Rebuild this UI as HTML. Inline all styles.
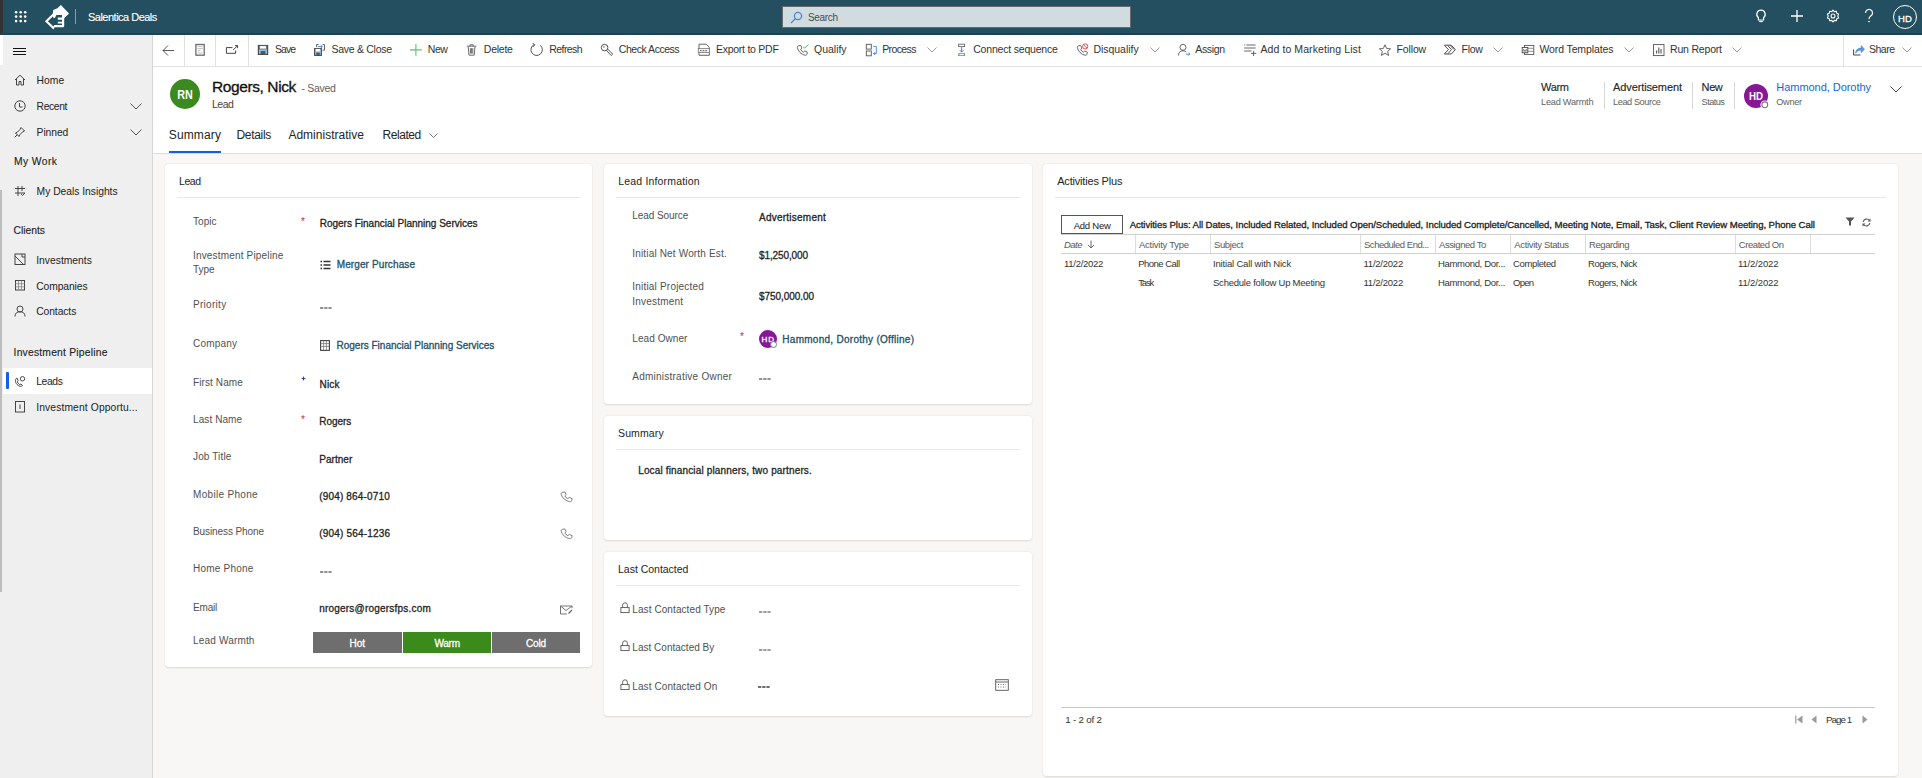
<!DOCTYPE html>
<html><head><meta charset="utf-8"><style>
html,body{margin:0;padding:0;}
body{width:1922px;height:778px;position:relative;overflow:hidden;background:#F8F7F6;font-family:"Liberation Sans",sans-serif;}
.t{position:absolute;white-space:nowrap;line-height:1;font-family:"Liberation Sans",sans-serif;}
svg{overflow:visible}
</style></head><body>
<div style="position:absolute;left:0px;top:0px;width:1922px;height:34px;background:#234F60"></div>
<div style="position:absolute;left:0px;top:33px;width:1922px;height:2px;background:#1B4353"></div>
<div style="position:absolute;left:0px;top:0px;width:3px;height:33px;background:#333"></div>
<div style="position:absolute;left:0px;top:35px;width:152px;height:743px;background:#EFEFEF"></div>
<div style="position:absolute;left:152px;top:35px;width:1px;height:743px;background:#D6D6D6"></div>
<div style="position:absolute;left:0px;top:35px;width:3px;height:30px;background:#FFFFFF"></div>
<div style="position:absolute;left:0px;top:190px;width:1.5px;height:402px;background:#BDBDBD"></div>
<div style="position:absolute;left:153px;top:35px;width:1769px;height:31px;background:#FFFFFF"></div>
<div style="position:absolute;left:153px;top:66px;width:1769px;height:1px;background:#E1E1E1"></div>
<div style="position:absolute;left:153px;top:67px;width:1769px;height:86px;background:#FFFFFF"></div>
<div style="position:absolute;left:153px;top:153px;width:1769px;height:1px;background:#DCDCDC"></div>
<div style="position:absolute;left:169px;top:151px;width:52px;height:2px;background:#1560D8"></div>
<div style="position:absolute;left:165px;top:164px;width:427px;height:503px;background:#fff;border-radius:4px;box-shadow:0 0.5px 2px rgba(0,0,0,0.13)"></div>
<div style="position:absolute;left:604px;top:164px;width:428px;height:240px;background:#fff;border-radius:4px;box-shadow:0 0.5px 2px rgba(0,0,0,0.13)"></div>
<div style="position:absolute;left:604px;top:416px;width:428px;height:124px;background:#fff;border-radius:4px;box-shadow:0 0.5px 2px rgba(0,0,0,0.13)"></div>
<div style="position:absolute;left:604px;top:552px;width:428px;height:164px;background:#fff;border-radius:4px;box-shadow:0 0.5px 2px rgba(0,0,0,0.13)"></div>
<div style="position:absolute;left:1043px;top:164px;width:855px;height:612px;background:#fff;border-radius:4px;box-shadow:0 0.5px 2px rgba(0,0,0,0.13)"></div>
<div style="position:absolute;left:177px;top:197px;width:403px;height:1px;background:#E8E8E8"></div>
<div style="position:absolute;left:616px;top:197px;width:404px;height:1px;background:#E8E8E8"></div>
<div style="position:absolute;left:616px;top:449px;width:404px;height:1px;background:#E8E8E8"></div>
<div style="position:absolute;left:616px;top:585px;width:404px;height:1px;background:#E8E8E8"></div>
<div style="position:absolute;left:1055px;top:197px;width:831px;height:1px;background:#E8E8E8"></div>
<div class="t" style="left:88.0px;top:12.00px;font-size:11px;color:#FFFFFF;letter-spacing:-0.509px;-webkit-text-stroke:0.12px #FFFFFF;">Salentica Deals</div>
<div style="position:absolute;left:782px;top:6px;width:349px;height:22px;background:#D1DCE1;border:1px solid #6B6B6B;box-sizing:border-box"></div>
<div class="t" style="left:808.0px;top:13.00px;font-size:10px;color:#4A4A4A;letter-spacing:-0.337px;">Search</div>
<div style="position:absolute;left:75px;top:9px;width:1px;height:15px;background:rgba(255,255,255,0.45)"></div>
<svg style="position:absolute;left:0;top:0" width="40" height="34" viewBox="0 0 40 34"><circle cx="16.1" cy="12.2" r="1.3" fill="#fff"/><circle cx="16.1" cy="16.6" r="1.3" fill="#fff"/><circle cx="16.1" cy="21.1" r="1.3" fill="#fff"/><circle cx="20.7" cy="12.2" r="1.3" fill="#fff"/><circle cx="20.7" cy="16.6" r="1.3" fill="#fff"/><circle cx="20.7" cy="21.1" r="1.3" fill="#fff"/><circle cx="25.2" cy="12.2" r="1.3" fill="#fff"/><circle cx="25.2" cy="16.6" r="1.3" fill="#fff"/><circle cx="25.2" cy="21.1" r="1.3" fill="#fff"/></svg>
<svg style="position:absolute;left:0;top:0" width="80" height="34" viewBox="0 0 80 34"><path fill-rule="evenodd" fill="#fff" d="M60.9 5.1 L69 13.4 L64.2 18.2 L64.2 26 Q64.2 27.3 63 27.3 L54.6 27.3 L53.4 29.6 L44.9 21.3 L52.8 13.6 L53.2 10.1 L57.4 8.2 Z M52.8 16.4 L47.9 21.3 L53.4 26.6 L54.3 25.1 L62 25.1 L62 23.6 L57.8 23.6 L57.8 21.7 L62 21.7 L62 19.7 L57.8 19.7 L57.8 17.4 L62 17.4 L62 15.1 L56.4 15.1 L55 17.8 L53.8 18.2 Z"/></svg>
<svg style="position:absolute;left:790px;top:11px" width="13" height="13" viewBox="0 0 13 13" fill="none"><circle cx="8" cy="5" r="3.6" stroke="#4C86C6" stroke-width="1.3"/><path d="M5.4 7.6 L1 12" stroke="#4C86C6" stroke-width="1.3"/></svg>
<svg style="position:absolute;left:1755px;top:9px" width="12" height="14" viewBox="0 0 12 14" fill="none"><path d="M6 1.2 a4.2 4.2 0 0 0 -2.6 7.5 v2.3 h5.2 v-2.3 a4.2 4.2 0 0 0 -2.6 -7.5 z" stroke="#fff" stroke-width="1.2"/><path d="M4.2 12.5 h3.6" stroke="#fff" stroke-width="1.2"/></svg>
<svg style="position:absolute;left:1790px;top:9px" width="14" height="14" viewBox="0 0 14 14" fill="none"><path d="M7 1 V13 M1 7 H13" stroke="#fff" stroke-width="1.3"/></svg>
<svg style="position:absolute;left:1826px;top:9px" width="14" height="14" viewBox="0 0 14 14" fill="none"><circle cx="7" cy="7" r="2" stroke="#fff" stroke-width="1.1"/><path d="M7 1 L8.2 2.6 L10.3 2.2 L10.7 4.2 L12.6 5.1 L11.8 7 L12.6 8.9 L10.7 9.8 L10.3 11.8 L8.2 11.4 L7 13 L5.8 11.4 L3.7 11.8 L3.3 9.8 L1.4 8.9 L2.2 7 L1.4 5.1 L3.3 4.2 L3.7 2.2 L5.8 2.6 Z" stroke="#fff" stroke-width="1.1" stroke-linejoin="round"/></svg>
<svg style="position:absolute;left:1864px;top:9px" width="10" height="14" viewBox="0 0 10 14" fill="none"><path d="M1.5 4 a3.5 3.5 0 1 1 5.5 2.8 c-1.2 0.9 -2 1.6 -2 3.2" stroke="#fff" stroke-width="1.2"/><circle cx="5" cy="12.6" r="0.8" fill="#fff"/></svg>
<div style="position:absolute;left:1893px;top:5px;width:24px;height:24px;border:1.2px solid #fff;border-radius:50%;box-sizing:border-box"></div>
<div class="t" style="left:1898.0px;top:14.00px;font-size:9.5px;color:#FFFFFF;letter-spacing:0.078px;-webkit-text-stroke:0.3px #FFFFFF;">HD</div>
<div style="position:absolute;left:13px;top:47.5px;width:13px;height:1.3px;background:#111"></div>
<div style="position:absolute;left:13px;top:50.5px;width:13px;height:1.3px;background:#111"></div>
<div style="position:absolute;left:13px;top:53.5px;width:13px;height:1.3px;background:#111"></div>
<div class="t" style="left:36.6px;top:76.00px;font-size:10.3px;color:#222;letter-spacing:0.042px;">Home</div>
<div class="t" style="left:36.6px;top:102.00px;font-size:10.3px;color:#222;letter-spacing:-0.347px;">Recent</div>
<div class="t" style="left:36.6px;top:128.00px;font-size:10.3px;color:#222;letter-spacing:-0.074px;">Pinned</div>
<div class="t" style="left:14.0px;top:157.00px;font-size:10.3px;color:#222;letter-spacing:0.428px;-webkit-text-stroke:0.12px #222;">My Work</div>
<div class="t" style="left:36.6px;top:187.00px;font-size:10.3px;color:#222;letter-spacing:-0.017px;">My Deals Insights</div>
<div class="t" style="left:13.6px;top:226.00px;font-size:10.3px;color:#222;letter-spacing:-0.014px;-webkit-text-stroke:0.12px #222;">Clients</div>
<div class="t" style="left:36.2px;top:256.00px;font-size:10.3px;color:#222;letter-spacing:0.017px;">Investments</div>
<div class="t" style="left:36.2px;top:282.00px;font-size:10.3px;color:#222;letter-spacing:-0.087px;">Companies</div>
<div class="t" style="left:36.2px;top:307.00px;font-size:10.3px;color:#222;letter-spacing:-0.078px;">Contacts</div>
<div class="t" style="left:13.6px;top:348.00px;font-size:10.3px;color:#222;letter-spacing:0.218px;-webkit-text-stroke:0.12px #222;">Investment Pipeline</div>
<div style="position:absolute;left:3px;top:368px;width:149px;height:26px;background:#fff"></div>
<div style="position:absolute;left:6px;top:372px;width:3px;height:17px;background:#1160E8;border-radius:1px"></div>
<div class="t" style="left:36.2px;top:377.00px;font-size:10.3px;color:#222;letter-spacing:-0.365px;">Leads</div>
<div class="t" style="left:36.2px;top:403.00px;font-size:10.3px;color:#222;letter-spacing:0.123px;">Investment Opportu...</div>
<svg style="position:absolute;left:14px;top:74px" width="12" height="12" viewBox="0 0 12 12" fill="none"><path d="M1 6 L6 1.2 L11 6 M2.5 4.8 V11 H5 V7.5 H7 V11 H9.5 V4.8" stroke="#444" stroke-width="1"/></svg>
<svg style="position:absolute;left:14px;top:100px" width="12" height="12" viewBox="0 0 12 12" fill="none"><circle cx="6" cy="6" r="5.2" stroke="#444" stroke-width="1"/><path d="M5.5 3 V7 H8.5" stroke="#444" stroke-width="1"/></svg>
<svg style="position:absolute;left:14px;top:126px" width="12" height="12" viewBox="0 0 12 12" fill="none"><path d="M7 1.5 L10.5 5 L8.5 6 L6 8.5 L5 10.5 L1.5 7 L3.5 6 L6 3.5 Z M3.5 8.5 L0.8 11.2" stroke="#444" stroke-width="1"/></svg>
<svg style="position:absolute;left:129.5px;top:103px" width="12" height="7" viewBox="0 0 12 7" fill="none"><path d="M0.5 0.5 L6 6 L11.5 0.5" stroke="#444" stroke-width="0.9"/></svg>
<svg style="position:absolute;left:129.5px;top:129px" width="12" height="7" viewBox="0 0 12 7" fill="none"><path d="M0.5 0.5 L6 6 L11.5 0.5" stroke="#444" stroke-width="0.9"/></svg>
<svg style="position:absolute;left:14px;top:185px" width="12" height="12" viewBox="0 0 12 12" fill="none"><path d="M1 3.5 H11 M1 8 H11 M4 1 V11 M8 1 V6" stroke="#444" stroke-width="1"/><path d="M7 9 L8.5 10.5 L11 8" stroke="#444" stroke-width="1"/></svg>
<svg style="position:absolute;left:14px;top:253px" width="12" height="12" viewBox="0 0 12 12" fill="none"><rect x="1" y="1" width="10" height="10.5" stroke="#444" stroke-width="1"/><path d="M1 3 L9 11 M8 1 V4 H11" stroke="#444" stroke-width="1"/></svg>
<svg style="position:absolute;left:14px;top:279px" width="12" height="12" viewBox="0 0 12 12" fill="none"><rect x="1.5" y="1.5" width="9" height="9.5" stroke="#444" stroke-width="1"/><path d="M1.5 4.7 H10.5 M1.5 7.8 H10.5 M4.5 1.5 V11 M7.5 1.5 V11" stroke="#888" stroke-width="0.8"/></svg>
<svg style="position:absolute;left:14px;top:305px" width="12" height="12" viewBox="0 0 12 12" fill="none"><circle cx="6" cy="4" r="3" stroke="#444" stroke-width="1"/><path d="M1 11.5 C1 8 3 6.8 6 6.8 C9 6.8 11 8 11 11.5" stroke="#444" stroke-width="1"/></svg>
<svg style="position:absolute;left:14px;top:375px" width="12" height="13" viewBox="0 0 12 13" fill="none"><path d="M3 3 C1 4 0.8 7 3 9.5 C5 11.5 7.5 12 8.5 10.5 L7 9 L5.5 9.5 C4.5 8.8 3.8 8 3.3 6.8 L4 5.5 Z" stroke="#444" stroke-width="1"/><circle cx="8.5" cy="3.8" r="2.2" stroke="#444" stroke-width="1"/></svg>
<svg style="position:absolute;left:14px;top:400px" width="12" height="13" viewBox="0 0 12 13" fill="none"><rect x="1.5" y="1.5" width="9" height="10.5" stroke="#444" stroke-width="1"/><path d="M6 4.5 V9" stroke="#444" stroke-width="1"/></svg>
<div style="position:absolute;left:184px;top:35px;width:1px;height:31px;background:#E1E1E1"></div>
<div style="position:absolute;left:215px;top:35px;width:1px;height:31px;background:#E1E1E1"></div>
<div style="position:absolute;left:248px;top:35px;width:1px;height:31px;background:#E1E1E1"></div>
<div style="position:absolute;left:1843px;top:35px;width:1px;height:31px;background:#E1E1E1"></div>
<div class="t" style="left:275.0px;top:44.00px;font-size:10.5px;color:#333;letter-spacing:-0.977px;">Save</div>
<div class="t" style="left:331.6px;top:44.00px;font-size:10.5px;color:#333;letter-spacing:-0.292px;">Save &amp; Close</div>
<div class="t" style="left:427.8px;top:44.00px;font-size:10.5px;color:#333;letter-spacing:-0.452px;">New</div>
<div class="t" style="left:483.8px;top:44.00px;font-size:10.5px;color:#333;letter-spacing:-0.250px;">Delete</div>
<div class="t" style="left:549.3px;top:44.00px;font-size:10.5px;color:#333;letter-spacing:-0.577px;">Refresh</div>
<div class="t" style="left:618.8px;top:44.00px;font-size:10.5px;color:#333;letter-spacing:-0.467px;">Check Access</div>
<div class="t" style="left:715.9px;top:44.00px;font-size:10.5px;color:#333;letter-spacing:-0.253px;">Export to PDF</div>
<div class="t" style="left:814.0px;top:44.00px;font-size:10.5px;color:#333;letter-spacing:-0.013px;">Qualify</div>
<div class="t" style="left:882.2px;top:44.00px;font-size:10.5px;color:#333;letter-spacing:-0.621px;">Process</div>
<div class="t" style="left:973.2px;top:44.00px;font-size:10.5px;color:#333;letter-spacing:-0.190px;">Connect sequence</div>
<div class="t" style="left:1093.4px;top:44.00px;font-size:10.5px;color:#333;letter-spacing:-0.024px;">Disqualify</div>
<div class="t" style="left:1195.3px;top:44.00px;font-size:10.5px;color:#333;letter-spacing:-0.363px;">Assign</div>
<div class="t" style="left:1260.5px;top:44.00px;font-size:10.5px;color:#333;letter-spacing:0.084px;">Add to Marketing List</div>
<div class="t" style="left:1396.4px;top:44.00px;font-size:10.5px;color:#333;letter-spacing:-0.108px;">Follow</div>
<div class="t" style="left:1461.6px;top:44.00px;font-size:10.5px;color:#333;letter-spacing:-0.323px;">Flow</div>
<div class="t" style="left:1539.4px;top:44.00px;font-size:10.5px;color:#333;letter-spacing:-0.106px;">Word Templates</div>
<div class="t" style="left:1670.0px;top:44.00px;font-size:10.5px;color:#333;letter-spacing:-0.188px;">Run Report</div>
<div class="t" style="left:1869.0px;top:44.00px;font-size:10.5px;color:#333;letter-spacing:-0.504px;">Share</div>
<svg style="position:absolute;left:927px;top:47px" width="10" height="6" viewBox="0 0 10 6" fill="none"><path d="M0.5 0.5 L5 5 L9.5 0.5" stroke="#8A8A8A" stroke-width="0.85"/></svg>
<svg style="position:absolute;left:1149.5px;top:47px" width="10" height="6" viewBox="0 0 10 6" fill="none"><path d="M0.5 0.5 L5 5 L9.5 0.5" stroke="#8A8A8A" stroke-width="0.85"/></svg>
<svg style="position:absolute;left:1493px;top:47px" width="10" height="6" viewBox="0 0 10 6" fill="none"><path d="M0.5 0.5 L5 5 L9.5 0.5" stroke="#8A8A8A" stroke-width="0.85"/></svg>
<svg style="position:absolute;left:1624px;top:47px" width="10" height="6" viewBox="0 0 10 6" fill="none"><path d="M0.5 0.5 L5 5 L9.5 0.5" stroke="#8A8A8A" stroke-width="0.85"/></svg>
<svg style="position:absolute;left:1731.5px;top:47px" width="10" height="6" viewBox="0 0 10 6" fill="none"><path d="M0.5 0.5 L5 5 L9.5 0.5" stroke="#8A8A8A" stroke-width="0.85"/></svg>
<svg style="position:absolute;left:1902px;top:47px" width="10" height="6" viewBox="0 0 10 6" fill="none"><path d="M0.5 0.5 L5 5 L9.5 0.5" stroke="#8A8A8A" stroke-width="0.85"/></svg>
<svg style="position:absolute;left:160px;top:42px" width="18" height="16" viewBox="160 42 18 16" fill="none"><path d="M168 45.5 L163 50.5 L168 55.5 M163 50.5 H174" stroke="#444" stroke-width="0.9"/></svg>
<svg style="position:absolute;left:193px;top:42px" width="14" height="16" viewBox="193 42 14 16" fill="none"><rect x="195.9" y="44.5" width="8.3" height="10.7" stroke="#6A6A6A" stroke-width="1.3"/><path d="M197.5 46.6 H202.7 M197.5 48.6 H202.7 M197.5 50.6 H200.5 M197.5 53 H202.7" stroke="#B0B0B0" stroke-width="0.8"/></svg>
<svg style="position:absolute;left:223px;top:42px" width="17" height="16" viewBox="223 42 17 16" fill="none"><path d="M232.5 47.6 H226.4 V53.3 H235.6 V50.5" stroke="#444" stroke-width="1"/><path d="M233.2 50 L237.3 45.9 M235 45.6 H237.6 V48.2" stroke="#444" stroke-width="1"/></svg>
<svg style="position:absolute;left:256px;top:43px" width="14" height="14" viewBox="256 43 14 14" fill="none"><rect x="258.4" y="45.5" width="9.2" height="8.9" fill="#8CC3F0" stroke="#4A4A4A" stroke-width="1.2"/><rect x="259.6" y="45.8" width="6.8" height="3.2" fill="#fff" stroke="#4A4A4A" stroke-width="0.6"/><rect x="260.6" y="51" width="4.8" height="3.2" fill="#555"/></svg>
<svg style="position:absolute;left:312px;top:42px" width="15" height="16" viewBox="312 42 15 16" fill="none"><path d="M316.6 47.2 V44.5 H318.6 M322.6 44.5 H324.5 V50.2 H322.5" stroke="#555" stroke-width="0.9"/><path d="M317.8 46.6 H322.3 M320.7 45 L322.3 46.6 L320.7 48.2" stroke="#3A86D6" stroke-width="0.9"/><rect x="314.6" y="48.6" width="6.8" height="6.8" fill="#8CC3F0" stroke="#4A4A4A" stroke-width="1.1"/><rect x="315.8" y="48.9" width="4.4" height="2.4" fill="#fff"/><rect x="316.3" y="52.6" width="3.4" height="2.4" fill="#555"/></svg>
<svg style="position:absolute;left:408px;top:42px" width="16" height="16" viewBox="408 42 16 16" fill="none"><path d="M415.9 44 V55.8 M410 49.9 H421.8" stroke="#62BE70" stroke-width="1.1"/></svg>
<svg style="position:absolute;left:465px;top:42px" width="13" height="16" viewBox="465 42 13 16" fill="none"><path d="M466.8 46.2 H476.4 M470 46.2 V44.8 H473.2 V46.2 M468.2 46.6 L469 55.2 H474.2 L475 46.6 M470.4 48.2 V53.6 M471.6 48.2 V53.6 M472.8 48.2 V53.6" stroke="#5A5A5A" stroke-width="0.9"/></svg>
<svg style="position:absolute;left:528px;top:42px" width="17" height="16" viewBox="528 42 17 16" fill="none"><path d="M540.2 45.3 A5.7 5.7 0 1 1 534.2 44.6" stroke="#4A4A4A" stroke-width="0.95"/><path d="M532.6 43.4 L534.8 44.6 L533.3 46.8" stroke="#4A4A4A" stroke-width="0.9"/></svg>
<svg style="position:absolute;left:599px;top:42px" width="16" height="16" viewBox="599 42 16 16" fill="none"><circle cx="604.6" cy="47.6" r="3.3" stroke="#4A4A4A" stroke-width="0.95"/><circle cx="603.9" cy="46.9" r="0.7" fill="#4A4A4A"/><path d="M606.4 50.3 L611.2 55.5 L612.7 54.1 L607.7 49" stroke="#4A4A4A" stroke-width="0.95" stroke-linejoin="round"/></svg>
<svg style="position:absolute;left:696px;top:42px" width="16" height="16" viewBox="696 42 16 16" fill="none"><path d="M699 44.2 H706.2 L709.3 47.3 V55.3 H699 Z" stroke="#555" stroke-width="0.9"/><rect x="698.2" y="48.6" width="11.4" height="4" fill="#F2F2F2" stroke="#666" stroke-width="0.7"/><path d="M700 50.6 H701.6 M702.6 50.6 H704.3 M705.3 50.6 H707" stroke="#777" stroke-width="1.2"/></svg>
<svg style="position:absolute;left:795px;top:42px" width="16" height="16" viewBox="795 42 16 16" fill="none"><g transform="translate(796.6 44.6) scale(0.95)"><path d="M2.2 1.2 L4.3 0.8 L5.6 3.6 L4.3 5 C4.9 6.5 5.8 7.4 7.2 8 L8.6 6.7 L11.3 8 L10.9 10.1 C10.6 11 9.8 11.4 8.8 11.2 C4.8 10.3 1.7 7.2 0.8 3.2 C0.6 2.2 1.1 1.4 2.2 1.2 Z" stroke="#555" stroke-width="0.95" stroke-linejoin="round"/></g><path d="M803.2 46.8 L804.6 48.2 L808.2 44.6" stroke="#4FAF5A" stroke-width="1"/></svg>
<svg style="position:absolute;left:864px;top:42px" width="16" height="16" viewBox="864 42 16 16" fill="none"><rect x="866.3" y="44.3" width="5" height="4.8" stroke="#555" stroke-width="0.9"/><rect x="866.3" y="51" width="5" height="4.8" stroke="#555" stroke-width="0.9"/><path d="M873.4 46.4 H876.3 V53.6 H873.6 M875 52.2 L873.6 53.6 L875 55" stroke="#3A86D6" stroke-width="0.9"/></svg>
<svg style="position:absolute;left:955px;top:42px" width="13" height="16" viewBox="955 42 13 16" fill="none"><rect x="958.6" y="44.2" width="6" height="2.4" stroke="#666" stroke-width="0.9"/><path d="M961.6 47.2 V52 M959.8 50.3 L961.6 52.1 L963.4 50.3" stroke="#3A86D6" stroke-width="1"/><rect x="958.2" y="53.2" width="6.8" height="2.8" fill="#4FAF5A"/><rect x="959.4" y="54" width="4.4" height="1.2" fill="#fff"/></svg>
<svg style="position:absolute;left:1075px;top:42px" width="15" height="16" viewBox="1075 42 15 16" fill="none"><g transform="translate(1076.6 44.6) scale(0.95)"><path d="M2.2 1.2 L4.3 0.8 L5.6 3.6 L4.3 5 C4.9 6.5 5.8 7.4 7.2 8 L8.6 6.7 L11.3 8 L10.9 10.1 C10.6 11 9.8 11.4 8.8 11.2 C4.8 10.3 1.7 7.2 0.8 3.2 C0.6 2.2 1.1 1.4 2.2 1.2 Z" stroke="#555" stroke-width="0.95" stroke-linejoin="round"/></g><circle cx="1085.2" cy="46.4" r="2.6" fill="#fff" stroke="#E04646" stroke-width="0.95"/><path d="M1083.4 44.6 L1087 48.2" stroke="#E04646" stroke-width="0.95"/></svg>
<svg style="position:absolute;left:1176px;top:42px" width="16" height="16" viewBox="1176 42 16 16" fill="none"><circle cx="1183" cy="47.3" r="3" stroke="#555" stroke-width="0.9"/><path d="M1178.5 55.5 C1178.5 52.2 1180.3 50.8 1183 50.8 C1184.5 50.8 1185.5 51.2 1186.2 52" stroke="#555" stroke-width="0.9"/><path d="M1186 54.2 H1190 M1188.6 52.8 L1190 54.2 L1188.6 55.6" stroke="#3A86D6" stroke-width="0.9"/></svg>
<svg style="position:absolute;left:1242px;top:42px" width="16" height="16" viewBox="1242 42 16 16" fill="none"><path d="M1244.2 45 H1245.2 M1246.4 45 H1255.6 M1244.2 48 H1255.6 M1244.2 51 H1251.5" stroke="#555" stroke-width="0.9"/><path d="M1253.6 50.8 V56 M1251 53.4 H1256.2" stroke="#555" stroke-width="0.9"/></svg>
<svg style="position:absolute;left:1377px;top:42px" width="16" height="16" viewBox="1377 42 16 16" fill="none"><path d="M1385 44.8 L1386.7 48.5 L1390.6 48.8 L1387.6 51.4 L1388.6 55.4 L1385 53.3 L1381.4 55.4 L1382.4 51.4 L1379.4 48.8 L1383.3 48.5 Z" stroke="#555" stroke-width="0.9" stroke-linejoin="round"/></svg>
<svg style="position:absolute;left:1442px;top:42px" width="16" height="16" viewBox="1442 42 16 16" fill="none"><path d="M1444.4 45.2 H1451.3 L1455.4 49.6 L1451.3 54 H1444.4 L1448.4 49.6 Z" stroke="#444" stroke-width="0.95" stroke-linejoin="round"/><path d="M1447.6 45.4 L1451.4 49.6 L1447.8 53.8 M1450.2 45.4 L1454 49.6" stroke="#444" stroke-width="0.9"/></svg>
<svg style="position:absolute;left:1520px;top:42px" width="16" height="16" viewBox="1520 42 16 16" fill="none"><rect x="1524.5" y="45.4" width="9.3" height="9" stroke="#555" stroke-width="0.9"/><path d="M1524.5 48.3 H1533.8 M1524.5 51.3 H1533.8" stroke="#777" stroke-width="0.8"/><rect x="1522.2" y="47.4" width="5.6" height="5.4" fill="#fff" stroke="#444" stroke-width="0.9"/><path d="M1523.3 49 L1524.1 51.6 L1525 49.6 L1525.9 51.6 L1526.7 49" stroke="#444" stroke-width="0.6"/></svg>
<svg style="position:absolute;left:1651px;top:42px" width="16" height="16" viewBox="1651 42 16 16" fill="none"><rect x="1653.5" y="44.6" width="10.5" height="11" stroke="#555" stroke-width="0.9"/><path d="M1656.6 53.5 V50.5 M1658.8 53.5 V47.5 M1661 53.5 V49" stroke="#555" stroke-width="1.1"/></svg>
<svg style="position:absolute;left:1851px;top:42px" width="16" height="16" viewBox="1851 42 16 16" fill="none"><path d="M1853.6 49.5 V55 H1860.5" stroke="#444" stroke-width="1"/><path d="M1855.5 53.2 C1855.8 49.6 1858.2 48 1861.2 48 V45.5 L1864.6 49.2 L1861.2 52.8 V50.2 C1858.6 50.2 1856.9 51.3 1855.5 53.2 Z" fill="#5A98DC" stroke="#3E7FC8" stroke-width="0.5"/></svg>
<div style="position:absolute;left:170px;top:79px;width:30px;height:30px;background:#3B8A1F;border-radius:50%"></div>
<div class="t" style="left:170px;top:88.6px;width:30px;text-align:center;font-size:12.4px;font-weight:bold;color:#fff;transform:scaleX(0.87);">RN</div>
<div class="t" style="left:212.0px;top:79.00px;font-size:15.5px;color:#111;letter-spacing:-0.401px;-webkit-text-stroke:0.3px #111;">Rogers, Nick</div>
<div class="t" style="left:301.5px;top:83.00px;font-size:10.5px;color:#616161;letter-spacing:-0.297px;">- Saved</div>
<div class="t" style="left:212.0px;top:99.00px;font-size:10.5px;color:#424242;letter-spacing:-0.485px;">Lead</div>
<div class="t" style="left:168.8px;top:129.00px;font-size:12px;color:#242424;letter-spacing:0.127px;">Summary</div>
<div class="t" style="left:236.5px;top:129.00px;font-size:12px;color:#242424;letter-spacing:-0.313px;">Details</div>
<div class="t" style="left:288.4px;top:129.00px;font-size:12px;color:#242424;letter-spacing:0.019px;">Administrative</div>
<div class="t" style="left:382.5px;top:129.00px;font-size:12px;color:#242424;letter-spacing:-0.443px;">Related</div>
<svg style="position:absolute;left:429px;top:133px" width="9" height="6" viewBox="0 0 9 6" fill="none"><path d="M0.5 0.5 L4.5 4.5 L8.5 0.5" stroke="#666" stroke-width="0.9"/></svg>
<div class="t" style="left:1541.0px;top:82.00px;font-size:11px;color:#242424;letter-spacing:-0.306px;-webkit-text-stroke:0.12px #242424;">Warm</div>
<div class="t" style="left:1541.0px;top:98.00px;font-size:9.2px;color:#616161;letter-spacing:-0.228px;">Lead Warmth</div>
<div class="t" style="left:1613.0px;top:82.00px;font-size:11px;color:#242424;letter-spacing:-0.109px;-webkit-text-stroke:0.12px #242424;">Advertisement</div>
<div class="t" style="left:1613.0px;top:98.00px;font-size:9.2px;color:#616161;letter-spacing:-0.417px;">Lead Source</div>
<div class="t" style="left:1701.6px;top:82.00px;font-size:11px;color:#242424;letter-spacing:-0.403px;-webkit-text-stroke:0.12px #242424;">New</div>
<div class="t" style="left:1701.6px;top:98.00px;font-size:9.2px;color:#616161;letter-spacing:-0.536px;">Status</div>
<div style="position:absolute;left:1603.5px;top:82px;width:1px;height:27px;background:#D6D6D6"></div>
<div style="position:absolute;left:1691.5px;top:82px;width:1px;height:27px;background:#D6D6D6"></div>
<div style="position:absolute;left:1734px;top:82px;width:1px;height:27px;background:#D6D6D6"></div>
<div style="position:absolute;left:1744px;top:84px;width:24px;height:24px;background:#881798;border-radius:50%"></div>
<div class="t" style="left:1744px;top:91px;width:24px;text-align:center;font-size:10.8px;font-weight:bold;color:#fff;transform:scaleX(0.9);">HD</div>
<svg style="position:absolute;left:1759px;top:99px" width="12" height="12" viewBox="0 0 12 12" fill="none"><circle cx="5.8" cy="5.8" r="4.4" fill="#fff"/><circle cx="5.8" cy="5.8" r="2.9" fill="#fff" stroke="#7A7A7A" stroke-width="1.1"/></svg>
<div class="t" style="left:1776.3px;top:82.00px;font-size:11px;color:#0F66E3;letter-spacing:-0.044px;">Hammond, Dorothy</div>
<div class="t" style="left:1776.3px;top:98.00px;font-size:9.2px;color:#616161;letter-spacing:-0.349px;">Owner</div>
<svg style="position:absolute;left:1890px;top:86px" width="12" height="7" viewBox="0 0 12 7" fill="none"><path d="M0.5 0.5 L6 6 L11.5 0.5" stroke="#444" stroke-width="1"/></svg>
<div class="t" style="left:179.0px;top:176.00px;font-size:10.5px;color:#242424;letter-spacing:-0.452px;">Lead</div>
<div class="t" style="left:193.0px;top:217.00px;font-size:10px;color:#505050;letter-spacing:0.064px;">Topic</div>
<div class="t" style="left:193.0px;top:251.00px;font-size:10px;color:#505050;letter-spacing:0.169px;">Investment Pipeline</div>
<div class="t" style="left:193.0px;top:265.00px;font-size:10px;color:#505050;">Type</div>
<div class="t" style="left:193.0px;top:300.00px;font-size:10px;color:#505050;letter-spacing:0.298px;">Priority</div>
<div class="t" style="left:193.0px;top:339.00px;font-size:10px;color:#505050;letter-spacing:0.201px;">Company</div>
<div class="t" style="left:193.0px;top:378.00px;font-size:10px;color:#505050;letter-spacing:0.101px;">First Name</div>
<div class="t" style="left:193.0px;top:415.00px;font-size:10px;color:#505050;letter-spacing:0.094px;">Last Name</div>
<div class="t" style="left:193.0px;top:452.00px;font-size:10px;color:#505050;letter-spacing:0.133px;">Job Title</div>
<div class="t" style="left:193.0px;top:490.00px;font-size:10px;color:#505050;letter-spacing:0.314px;">Mobile Phone</div>
<div class="t" style="left:193.0px;top:527.00px;font-size:10px;color:#505050;letter-spacing:-0.097px;">Business Phone</div>
<div class="t" style="left:193.0px;top:564.00px;font-size:10px;color:#505050;letter-spacing:0.215px;">Home Phone</div>
<div class="t" style="left:193.0px;top:603.00px;font-size:10px;color:#505050;letter-spacing:-0.176px;">Email</div>
<div class="t" style="left:193.0px;top:636.00px;font-size:10px;color:#505050;letter-spacing:0.175px;">Lead Warmth</div>
<div class="t" style="left:301.0px;top:217.00px;font-size:10px;color:#E0202E;">*</div>
<div class="t" style="left:301.0px;top:415.00px;font-size:10px;color:#E0202E;">*</div>
<svg style="position:absolute;left:300.5px;top:376px" width="5" height="5" viewBox="0 0 5 5" fill="none"><path d="M2.5 0.6 V4.4 M0.6 2.5 H4.4" stroke="#2040D0" stroke-width="1"/></svg>
<div class="t" style="left:319.7px;top:219.00px;font-size:10px;color:#1F1F1F;-webkit-text-stroke:0.3px #1F1F1F;">Rogers Financial Planning Services</div>
<div class="t" style="left:336.7px;top:260.00px;font-size:10px;color:#22506A;letter-spacing:0.115px;-webkit-text-stroke:0.3px #22506A;">Merger Purchase</div>
<svg style="position:absolute;left:318.8px;top:304.5px" width="16" height="6" viewBox="318.8 304.5 16 6"><rect x="319.80" y="306.80" width="3.3" height="1.4" fill="#666"/><rect x="324.00" y="306.80" width="3.3" height="1.4" fill="#666"/><rect x="328.20" y="306.80" width="3.3" height="1.4" fill="#666"/></svg>
<div class="t" style="left:336.5px;top:341.00px;font-size:10px;color:#22506A;-webkit-text-stroke:0.3px #22506A;">Rogers Financial Planning Services</div>
<div class="t" style="left:319.6px;top:380.00px;font-size:10px;color:#1F1F1F;letter-spacing:0.119px;-webkit-text-stroke:0.3px #1F1F1F;">Nick</div>
<div class="t" style="left:319.2px;top:417.00px;font-size:10px;color:#1F1F1F;letter-spacing:-0.027px;-webkit-text-stroke:0.3px #1F1F1F;">Rogers</div>
<div class="t" style="left:319.2px;top:455.00px;font-size:10px;color:#1F1F1F;letter-spacing:0.052px;-webkit-text-stroke:0.3px #1F1F1F;">Partner</div>
<div class="t" style="left:319.2px;top:492.00px;font-size:10px;color:#1F1F1F;letter-spacing:0.171px;-webkit-text-stroke:0.3px #1F1F1F;">(904) 864-0710</div>
<div class="t" style="left:319.2px;top:529.00px;font-size:10px;color:#1F1F1F;letter-spacing:0.186px;-webkit-text-stroke:0.3px #1F1F1F;">(904) 564-1236</div>
<svg style="position:absolute;left:318.8px;top:569px" width="16" height="6" viewBox="318.8 569 16 6"><rect x="319.80" y="571.30" width="3.3" height="1.4" fill="#666"/><rect x="324.00" y="571.30" width="3.3" height="1.4" fill="#666"/><rect x="328.20" y="571.30" width="3.3" height="1.4" fill="#666"/></svg>
<div class="t" style="left:319.2px;top:604.00px;font-size:10px;color:#1F1F1F;letter-spacing:0.210px;-webkit-text-stroke:0.3px #1F1F1F;">nrogers@rogersfps.com</div>
<svg style="position:absolute;left:320px;top:260px" width="11" height="10" viewBox="0 0 11 10" fill="none"><path d="M0.5 1.5 H2 M0.5 5 H2 M0.5 8.5 H2 M3.5 1.5 H10.5 M3.5 5 H10.5 M3.5 8.5 H10.5" stroke="#333" stroke-width="1.3"/></svg>
<svg style="position:absolute;left:320px;top:339.5px" width="10" height="11" viewBox="0 0 10 11" fill="none"><rect x="0.6" y="0.6" width="8.8" height="9.8" stroke="#444" stroke-width="1.1"/><path d="M1 3.6 H9 M1 6.4 H9 M3.6 1 V10 M6.4 1 V10" stroke="#777" stroke-width="0.8"/></svg>
<svg style="position:absolute;left:560px;top:491px" width="13" height="12" viewBox="0 0 13 12" fill="none"><g transform="translate(0.3 0.2) scale(1.05 0.93)"><path d="M2.2 1.2 L4.3 0.8 L5.6 3.6 L4.3 5 C4.9 6.5 5.8 7.4 7.2 8 L8.6 6.7 L11.3 8 L10.9 10.1 C10.6 11 9.8 11.4 8.8 11.2 C4.8 10.3 1.7 7.2 0.8 3.2 C0.6 2.2 1.1 1.4 2.2 1.2 Z" stroke="#666" stroke-width="0.85" stroke-linejoin="round"/></g></svg>
<svg style="position:absolute;left:560px;top:528px" width="13" height="12" viewBox="0 0 13 12" fill="none"><g transform="translate(0.3 0.2) scale(1.05 0.93)"><path d="M2.2 1.2 L4.3 0.8 L5.6 3.6 L4.3 5 C4.9 6.5 5.8 7.4 7.2 8 L8.6 6.7 L11.3 8 L10.9 10.1 C10.6 11 9.8 11.4 8.8 11.2 C4.8 10.3 1.7 7.2 0.8 3.2 C0.6 2.2 1.1 1.4 2.2 1.2 Z" stroke="#666" stroke-width="0.85" stroke-linejoin="round"/></g></svg>
<svg style="position:absolute;left:560px;top:604.5px" width="13" height="10" viewBox="0 0 13 10" fill="none"><path d="M0.5 1 H12 V3 M0.5 1 V9 H7 M0.5 1 L6 5.5 L12 1" stroke="#666" stroke-width="0.9"/><path d="M8.5 8.5 L12 5" stroke="#666" stroke-width="1.2"/></svg>
<div style="position:absolute;left:313px;top:632px;width:89px;height:21px;background:#6E6E6E"></div>
<div style="position:absolute;left:403px;top:632px;width:88px;height:21px;background:#3A8A1C"></div>
<div style="position:absolute;left:492px;top:632px;width:88px;height:21px;background:#6E6E6E"></div>
<div class="t" style="left:349.5px;top:639.00px;font-size:10px;color:#FFFFFF;letter-spacing:-0.030px;-webkit-text-stroke:0.3px #FFFFFF;">Hot</div>
<div class="t" style="left:434.5px;top:639.00px;font-size:10px;color:#FFFFFF;letter-spacing:-0.263px;-webkit-text-stroke:0.3px #FFFFFF;">Warm</div>
<div class="t" style="left:526.0px;top:639.00px;font-size:10px;color:#FFFFFF;letter-spacing:-0.189px;-webkit-text-stroke:0.3px #FFFFFF;">Cold</div>
<div class="t" style="left:618.3px;top:176.00px;font-size:10.5px;color:#242424;letter-spacing:0.167px;">Lead Information</div>
<div class="t" style="left:632.3px;top:211.00px;font-size:10px;color:#505050;letter-spacing:-0.070px;">Lead Source</div>
<div class="t" style="left:632.3px;top:249.00px;font-size:10px;color:#505050;letter-spacing:0.164px;">Initial Net Worth Est.</div>
<div class="t" style="left:632.3px;top:282.00px;font-size:10px;color:#505050;letter-spacing:0.196px;">Initial Projected</div>
<div class="t" style="left:632.3px;top:297.00px;font-size:10px;color:#505050;letter-spacing:0.199px;">Investment</div>
<div class="t" style="left:632.3px;top:334.00px;font-size:10px;color:#505050;letter-spacing:0.070px;">Lead Owner</div>
<div class="t" style="left:632.3px;top:372.00px;font-size:10px;color:#505050;letter-spacing:0.236px;">Administrative Owner</div>
<div class="t" style="left:740.0px;top:332.00px;font-size:10px;color:#E0202E;">*</div>
<div class="t" style="left:759.0px;top:213.00px;font-size:10px;color:#1F1F1F;letter-spacing:0.241px;-webkit-text-stroke:0.3px #1F1F1F;">Advertisement</div>
<div class="t" style="left:759.0px;top:251.00px;font-size:10px;color:#1F1F1F;letter-spacing:-0.116px;-webkit-text-stroke:0.3px #1F1F1F;">$1,250,000</div>
<div class="t" style="left:759.0px;top:292.00px;font-size:10px;color:#1F1F1F;letter-spacing:-0.060px;-webkit-text-stroke:0.3px #1F1F1F;">$750,000.00</div>
<div style="position:absolute;left:759px;top:330px;width:18px;height:18px;background:#881798;border-radius:50%"></div>
<div class="t" style="left:761.5px;top:336.00px;font-size:8px;color:#FFFFFF;letter-spacing:0.945px;-webkit-text-stroke:0.3px #FFFFFF;">HD</div>
<div style="position:absolute;left:770px;top:341px;width:7px;height:7px;background:#fff;border-radius:50%;border:1.2px solid #777;box-sizing:border-box"></div>
<div class="t" style="left:782.3px;top:335.00px;font-size:10px;color:#22506A;letter-spacing:0.274px;-webkit-text-stroke:0.3px #22506A;">Hammond, Dorothy (Offline)</div>
<svg style="position:absolute;left:758px;top:376px" width="16" height="6" viewBox="758 376 16 6"><rect x="759.00" y="378.30" width="3.3" height="1.4" fill="#666"/><rect x="763.20" y="378.30" width="3.3" height="1.4" fill="#666"/><rect x="767.40" y="378.30" width="3.3" height="1.4" fill="#666"/></svg>
<div class="t" style="left:618.0px;top:428.00px;font-size:10.5px;color:#242424;letter-spacing:0.130px;">Summary</div>
<div class="t" style="left:638.2px;top:466.00px;font-size:10px;color:#1F1F1F;letter-spacing:0.151px;-webkit-text-stroke:0.3px #1F1F1F;">Local financial planners, two partners.</div>
<div class="t" style="left:618.0px;top:564.00px;font-size:10.5px;color:#242424;letter-spacing:-0.017px;">Last Contacted</div>
<div class="t" style="left:632.3px;top:605.00px;font-size:10px;color:#505050;letter-spacing:0.087px;">Last Contacted Type</div>
<div class="t" style="left:632.3px;top:643.00px;font-size:10px;color:#505050;letter-spacing:0.018px;">Last Contacted By</div>
<div class="t" style="left:632.3px;top:682.00px;font-size:10px;color:#505050;letter-spacing:0.095px;">Last Contacted On</div>
<svg style="position:absolute;left:619.5px;top:602px" width="10" height="11" viewBox="0 0 10 11" fill="none"><path d="M2.6 5.6 V3.2 a2.4 2.4 0 0 1 4.8 0 V5.6" stroke="#555" stroke-width="0.9"/><rect x="0.9" y="5.6" width="8.2" height="5" stroke="#555" stroke-width="0.9"/></svg>
<svg style="position:absolute;left:619.5px;top:640px" width="10" height="11" viewBox="0 0 10 11" fill="none"><path d="M2.6 5.6 V3.2 a2.4 2.4 0 0 1 4.8 0 V5.6" stroke="#555" stroke-width="0.9"/><rect x="0.9" y="5.6" width="8.2" height="5" stroke="#555" stroke-width="0.9"/></svg>
<svg style="position:absolute;left:619.5px;top:679px" width="10" height="11" viewBox="0 0 10 11" fill="none"><path d="M2.6 5.6 V3.2 a2.4 2.4 0 0 1 4.8 0 V5.6" stroke="#555" stroke-width="0.9"/><rect x="0.9" y="5.6" width="8.2" height="5" stroke="#555" stroke-width="0.9"/></svg>
<svg style="position:absolute;left:758px;top:609px" width="16" height="6" viewBox="758 609 16 6"><rect x="759.00" y="611.30" width="3.3" height="1.4" fill="#777"/><rect x="763.20" y="611.30" width="3.3" height="1.4" fill="#777"/><rect x="767.40" y="611.30" width="3.3" height="1.4" fill="#777"/></svg>
<svg style="position:absolute;left:758px;top:646.8px" width="16" height="6" viewBox="758 646.8 16 6"><rect x="759.00" y="649.10" width="3.3" height="1.4" fill="#777"/><rect x="763.20" y="649.10" width="3.3" height="1.4" fill="#777"/><rect x="767.40" y="649.10" width="3.3" height="1.4" fill="#777"/></svg>
<svg style="position:absolute;left:756.6px;top:684.3px" width="16" height="6" viewBox="756.6 684.3 16 6"><rect x="757.60" y="686.60" width="3.3" height="1.4" fill="#333"/><rect x="761.80" y="686.60" width="3.3" height="1.4" fill="#333"/><rect x="766.00" y="686.60" width="3.3" height="1.4" fill="#333"/></svg>
<svg style="position:absolute;left:995px;top:679px" width="14" height="12" viewBox="0 0 14 12" fill="none"><rect x="0.7" y="0.7" width="12.6" height="10.6" stroke="#555" stroke-width="0.9"/><path d="M0.7 3 H13.3" stroke="#555" stroke-width="0.9"/><path d="M3 5.5 H4 M5.5 5.5 H6.5 M8 5.5 H9 M10.5 5.5 H11 M3 8 H4 M5.5 8 H6.5 M8 8 H9 M10.5 8 H11" stroke="#666" stroke-width="0.9"/></svg>
<div class="t" style="left:1057.2px;top:176.00px;font-size:11px;color:#242424;letter-spacing:-0.189px;">Activities Plus</div>
<div style="position:absolute;left:1061px;top:215px;width:62px;height:19px;border:1px solid #555;box-sizing:border-box;background:#fff"></div>
<div class="t" style="left:1073.7px;top:221.00px;font-size:9.5px;color:#222;letter-spacing:-0.241px;">Add New</div>
<div class="t" style="left:1129.7px;top:220.00px;font-size:9.6px;color:#222;letter-spacing:-0.066px;-webkit-text-stroke:0.3px #222;">Activities Plus: All Dates, Included Related, Included Open/Scheduled, Included Complete/Cancelled, Meeting Note, Email, Task, Client Review Meeting, Phone Call</div>
<svg style="position:absolute;left:1845px;top:217px" width="10" height="9" viewBox="0 0 10 9" fill="none"><path d="M0.5 0.5 H9.5 L6 4.5 V8.5 H4 V4.5 Z" fill="#555"/></svg>
<svg style="position:absolute;left:1861.5px;top:217.5px" width="9" height="9" viewBox="0 0 9 9" fill="none"><path d="M1.2 4 A3.5 3.5 0 0 1 7.5 2.5 M7.8 5 A3.5 3.5 0 0 1 1.5 6.5" stroke="#555" stroke-width="1.2"/><path d="M8.5 0.5 V3.5 H5.5 Z M0.5 8.5 V5.5 H3.5 Z" fill="#555"/></svg>
<div style="position:absolute;left:1061px;top:234px;width:814px;height:1px;background:#D0D0D0"></div>
<div style="position:absolute;left:1061px;top:253px;width:814px;height:1px;background:#D0D0D0"></div>
<div style="position:absolute;left:1135px;top:235px;width:1px;height:18px;background:#DCDCDC"></div>
<div style="position:absolute;left:1210px;top:235px;width:1px;height:18px;background:#DCDCDC"></div>
<div style="position:absolute;left:1360px;top:235px;width:1px;height:18px;background:#DCDCDC"></div>
<div style="position:absolute;left:1435px;top:235px;width:1px;height:18px;background:#DCDCDC"></div>
<div style="position:absolute;left:1510px;top:235px;width:1px;height:18px;background:#DCDCDC"></div>
<div style="position:absolute;left:1585px;top:235px;width:1px;height:18px;background:#DCDCDC"></div>
<div style="position:absolute;left:1735px;top:235px;width:1px;height:18px;background:#DCDCDC"></div>
<div style="position:absolute;left:1810px;top:235px;width:1px;height:18px;background:#DCDCDC"></div>
<div class="t" style="left:1064.0px;top:240.00px;font-size:9.5px;color:#5A5A5A;letter-spacing:-0.522px;font-style:italic;">Date</div>
<svg style="position:absolute;left:1087px;top:240px" width="8" height="9" viewBox="0 0 8 9" fill="none"><path d="M4 0.5 V8 M1 5 L4 8 L7 5" stroke="#5A5A5A" stroke-width="0.9"/></svg>
<div class="t" style="left:1139.0px;top:240.00px;font-size:9.5px;color:#5A5A5A;letter-spacing:-0.262px;">Activity Type</div>
<div class="t" style="left:1214.0px;top:240.00px;font-size:9.5px;color:#5A5A5A;letter-spacing:-0.398px;">Subject</div>
<div class="t" style="left:1364.0px;top:240.00px;font-size:9.5px;color:#5A5A5A;letter-spacing:-0.477px;">Scheduled End...</div>
<div class="t" style="left:1439.1px;top:240.00px;font-size:9.5px;color:#5A5A5A;letter-spacing:-0.438px;">Assigned To</div>
<div class="t" style="left:1514.3px;top:240.00px;font-size:9.5px;color:#5A5A5A;letter-spacing:-0.347px;">Activity Status</div>
<div class="t" style="left:1589.0px;top:240.00px;font-size:9.5px;color:#5A5A5A;letter-spacing:-0.417px;">Regarding</div>
<div class="t" style="left:1738.8px;top:240.00px;font-size:9.5px;color:#5A5A5A;letter-spacing:-0.434px;">Created On</div>
<div class="t" style="left:1064.0px;top:259.00px;font-size:9.5px;color:#333;letter-spacing:-0.282px;">11/2/2022</div>
<div class="t" style="left:1138.3px;top:259.00px;font-size:9.5px;color:#333;letter-spacing:-0.530px;">Phone Call</div>
<div class="t" style="left:1213.0px;top:259.00px;font-size:9.5px;color:#333;letter-spacing:-0.173px;">Initial Call with Nick</div>
<div class="t" style="left:1363.5px;top:259.00px;font-size:9.5px;color:#333;letter-spacing:-0.232px;">11/2/2022</div>
<div class="t" style="left:1438.0px;top:259.00px;font-size:9.5px;color:#333;letter-spacing:-0.314px;">Hammond, Dor...</div>
<div class="t" style="left:1513.0px;top:259.00px;font-size:9.5px;color:#333;letter-spacing:-0.355px;">Completed</div>
<div class="t" style="left:1588.0px;top:259.00px;font-size:9.5px;color:#333;letter-spacing:-0.470px;">Rogers, Nick</div>
<div class="t" style="left:1738.0px;top:259.00px;font-size:9.5px;color:#333;letter-spacing:-0.132px;">11/2/2022</div>
<div class="t" style="left:1138.3px;top:278.00px;font-size:9.5px;color:#333;letter-spacing:-1.211px;">Task</div>
<div class="t" style="left:1213.0px;top:278.00px;font-size:9.5px;color:#333;letter-spacing:-0.230px;">Schedule follow Up Meeting</div>
<div class="t" style="left:1363.5px;top:278.00px;font-size:9.5px;color:#333;letter-spacing:-0.232px;">11/2/2022</div>
<div class="t" style="left:1438.0px;top:278.00px;font-size:9.5px;color:#333;letter-spacing:-0.314px;">Hammond, Dor...</div>
<div class="t" style="left:1513.0px;top:278.00px;font-size:9.5px;color:#333;letter-spacing:-0.713px;">Open</div>
<div class="t" style="left:1588.0px;top:278.00px;font-size:9.5px;color:#333;letter-spacing:-0.470px;">Rogers, Nick</div>
<div class="t" style="left:1738.0px;top:278.00px;font-size:9.5px;color:#333;letter-spacing:-0.132px;">11/2/2022</div>
<div style="position:absolute;left:1061px;top:707px;width:814px;height:1px;background:#C8C8C8"></div>
<div class="t" style="left:1065.2px;top:715.00px;font-size:9.8px;color:#333;letter-spacing:-0.208px;">1 - 2 of 2</div>
<div class="t" style="left:1826.0px;top:715.00px;font-size:9.8px;color:#333;letter-spacing:-0.952px;">Page 1</div>
<svg style="position:absolute;left:1795px;top:715px" width="8" height="9" viewBox="0 0 8 9" fill="none"><path d="M0.8 0.5 V8.5" stroke="#9A9A9A" stroke-width="1.2"/><path d="M7.5 0.5 V8.5 L2 4.5 Z" fill="#9A9A9A"/></svg>
<svg style="position:absolute;left:1811px;top:715px" width="6" height="9" viewBox="0 0 6 9" fill="none"><path d="M5.5 0.5 V8.5 L0.5 4.5 Z" fill="#9A9A9A"/></svg>
<svg style="position:absolute;left:1861.5px;top:715px" width="6" height="9" viewBox="0 0 6 9" fill="none"><path d="M0.5 0.5 V8.5 L5.5 4.5 Z" fill="#9A9A9A"/></svg>
</body></html>
